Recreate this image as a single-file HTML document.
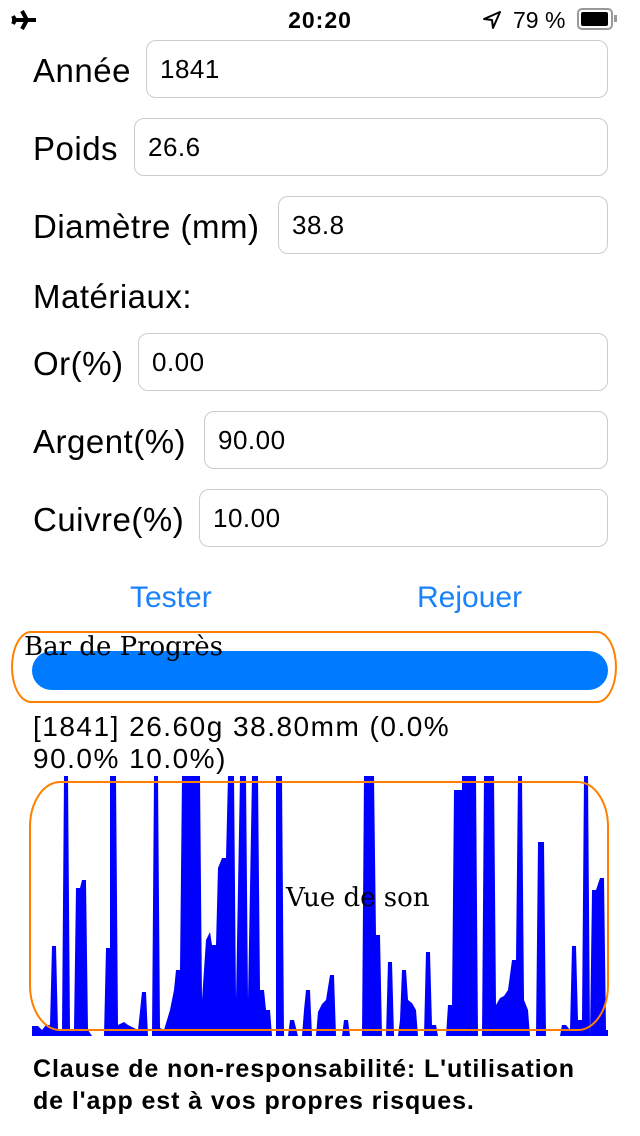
<!DOCTYPE html>
<html><head><meta charset="utf-8"><style>
body{margin:0;width:640px;height:1136px;background:#fff;font-family:"Liberation Sans",sans-serif;position:relative;overflow:hidden}
.a{position:absolute}
.lbl{position:absolute;font-size:33px;color:#000;left:33px;letter-spacing:0.5px}
.inp{position:absolute;height:58px;border:1px solid #ccc;border-radius:10px;box-sizing:border-box;font-size:26px;line-height:56px;padding-left:13px;right:32px;letter-spacing:0.5px}
</style></head><body>
<svg class="a" style="left:10px;top:8px" width="28" height="24" viewBox="0 0 28 24"><path d="M2 12 L26 12 M12 3 L17 12 L12 21 M3 8 L5 12 L3 16" stroke="#000" stroke-width="4" fill="none"/></svg>
<div class="a" style="left:0;width:640px;top:7px;text-align:center;font-size:23px;font-weight:bold;letter-spacing:1px">20:20</div>
<svg class="a" style="left:482px;top:10px" width="20" height="20" viewBox="0 0 20 20"><path d="M18 2 L2 9 L10 10 L11 18 Z" fill="none" stroke="#000" stroke-width="2" stroke-linejoin="round"/></svg>
<div class="a" style="left:513px;top:7px;font-size:23px">79 %</div>
<div class="a" style="left:577px;top:8px;width:36px;height:22px;border:2px solid #999;border-radius:5px;box-sizing:border-box"><div style="margin:2px;height:14px;width:27px;background:#000;border-radius:2px"></div></div>
<div class="a" style="left:614px;top:15px;width:3px;height:7px;background:#999"></div>

<div class="lbl" style="top:52px">Année</div><div class="inp" style="left:146px;top:40px">1841</div>
<div class="lbl" style="top:130px">Poids</div><div class="inp" style="left:134px;top:118px">26.6</div>
<div class="lbl" style="top:208px">Diamètre (mm)</div><div class="inp" style="left:278px;top:196px">38.8</div>
<div class="lbl" style="top:278px">Matériaux:</div>
<div class="lbl" style="top:345px">Or(%)</div><div class="inp" style="left:138px;top:333px">0.00</div>
<div class="lbl" style="top:423px">Argent(%)</div><div class="inp" style="left:204px;top:411px">90.00</div>
<div class="lbl" style="top:501px">Cuivre(%)</div><div class="inp" style="left:199px;top:489px">10.00</div>
<div class="a" style="left:130px;top:581px;font-size:30px;color:#1a82fb">Tester</div>
<div class="a" style="left:417px;top:581px;font-size:30px;color:#1a82fb">Rejouer</div>

<div class="a" style="left:11px;top:631px;width:606px;height:72px;border:2px solid #ff8000;border-radius:20px/36px;box-sizing:border-box"></div>
<div class="a" style="left:32px;top:651px;width:576px;height:39px;background:#007aff;border-radius:20px"></div>
<div class="a" style="left:24px;top:632px;font-family:'DejaVu Serif',serif;font-size:26px">Bar de Progrès</div>

<div class="a" style="left:33px;top:711px;font-size:28px;line-height:32px;letter-spacing:1.5px">[1841] 26.60g 38.80mm (0.0%<br>90.0% 10.0%)</div>

<svg class="a" style="left:0;top:0" width="640" height="1136">
<polygon fill="#0000ff" points="32,1036 32,1026 38,1026 42,1030 46,1025 50,1025 52,946 56,946 58,1030 62,1030 64,776 68,776 70,1030 74,1030 76,888 80,888 82,880 86,880 88,1030 92,1036 104,1036 106,948 110,948 110,776 116,776 118,1025 124,1022 128,1025 134,1028 138,1030 142,992 146,992 148,1036 152,1036 154,776 158,776 160,1028 164,1030 170,1010 174,990 176,970 180,970 182,776 200,776 202,1000 206,940 210,932 212,945 216,945 218,868 222,858 226,858 228,776 234,776 236,1000 240,776 246,776 248,1000 252,776 258,776 260,990 264,990 266,1010 270,1010 272,1036 276,1036 276,776 282,776 284,1036 288,1036 290,1020 294,1020 298,1036 302,1036 304,1010 306,990 310,990 312,1036 316,1036 318,1012 322,1004 326,1000 330,975 334,975 336,1036 342,1036 344,1020 348,1020 350,1036 362,1036 364,776 374,776 376,935 380,935 382,1036 386,1036 388,962 392,962 394,1036 398,1036 400,1020 402,970 406,970 408,1000 412,1003 416,1010 418,1036 424,1036 426,952 430,952 432,1025 436,1025 438,1036 446,1036 448,1005 452,1005 454,790 462,790 462,776 476,776 478,1036 482,1036 484,776 494,776 496,1005 500,998 504,996 508,990 512,960 516,960 518,776 522,776 524,1000 528,1010 530,1036 536,1036 538,842 544,842 546,1036 560,1036 562,1025 566,1025 570,1030 572,946 576,946 578,1020 582,1020 584,776 588,776 590,1036 592,890 596,890 600,878 604,878 606,1030 608,1030 608,1036"/>
<rect x="30" y="782" width="578" height="248" rx="30" ry="45" fill="none" stroke="#ff8000" stroke-width="2"/>
<text x="286" y="906" font-family="DejaVu Serif,serif" font-size="26" fill="#000">Vue de son</text>
</svg>

<div class="a" style="left:33px;top:1053px;font-size:25px;font-weight:bold;line-height:32px;letter-spacing:0.9px">Clause de non-responsabilité: L'utilisation<br>de l'app est à vos propres risques.</div>
</body></html>
